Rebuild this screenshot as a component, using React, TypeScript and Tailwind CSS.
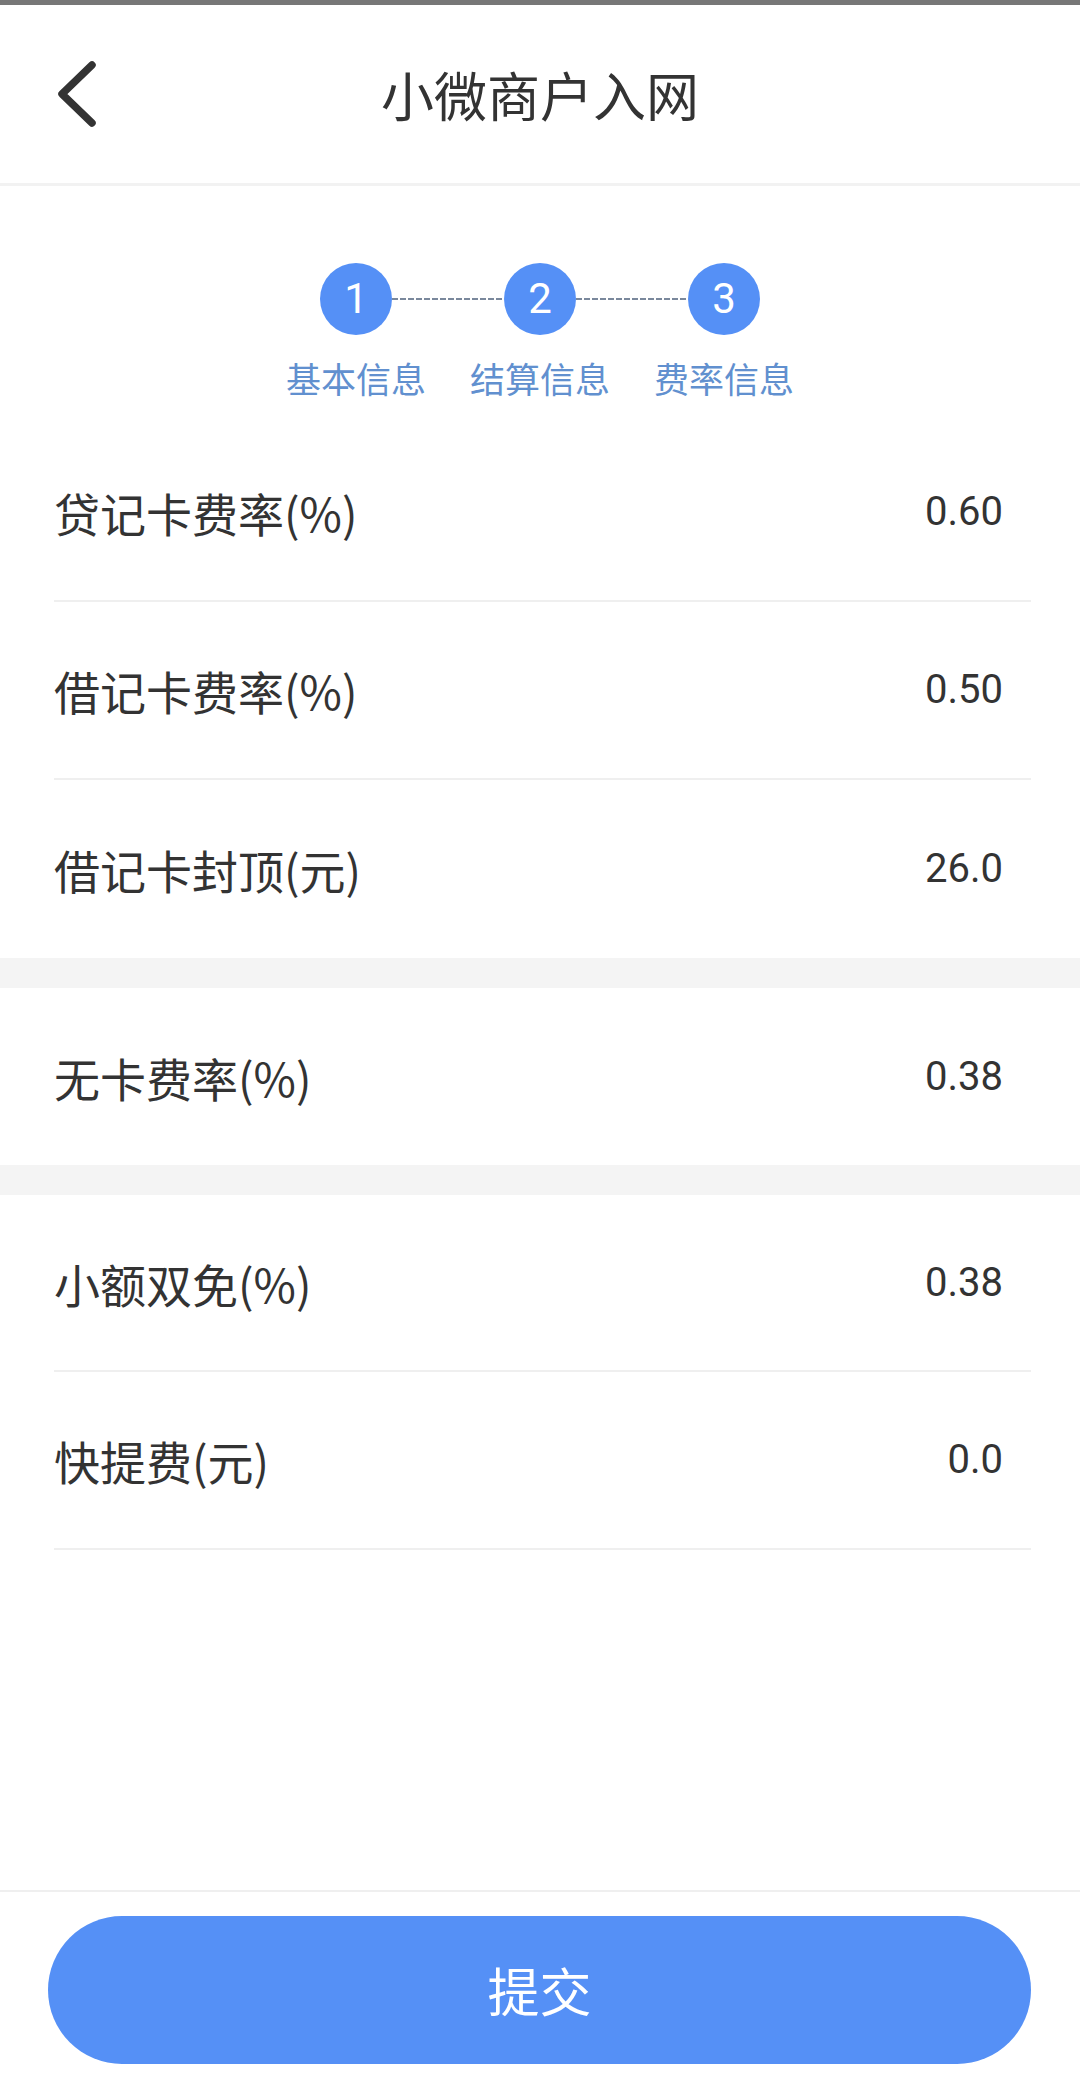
import React from "react";

const font = { fontFamily: '"Noto Sans CJK SC", "Noto Sans", sans-serif' };

interface RateRowProps {
  label: string;
  value: string;
  divider?: boolean;
  height?: string;
}

function RateRow({ label, value, divider = true, height = "h-[178px]" }: RateRowProps) {
  return (
    <div
      className={`ml-[54px] mr-[49px] flex items-center justify-between ${height} ${
        divider ? "border-b-2 border-[#efefef]" : ""
      }`}
    >
      <span className="text-[46px] leading-none text-[#333]">{label}</span>
      <span className="pr-[28px] font-['Roboto'] text-[40px] leading-none text-[#333]">{value}</span>
    </div>
  );
}

function Band() {
  return <div className="h-[30px] bg-[#f4f4f4]" />;
}

const steps = ["基本信息", "结算信息", "费率信息"];

function Stepper() {
  return (
    <div className="flex h-[238px] flex-col items-center pt-[77px]">
      {/* circles */}
      <div className="flex items-center">
        {steps.map((_, i) => (
          <React.Fragment key={i}>
            {i > 0 && (
              <div className="h-[2px] w-[112px] bg-[repeating-linear-gradient(90deg,#7a889c_0_6px,transparent_6px_8px)]" />
            )}
            <div className="flex h-[72px] w-[72px] items-center justify-center rounded-full bg-[#5590f6] font-['Roboto'] text-[42px] leading-none text-white">
              {i + 1}
            </div>
          </React.Fragment>
        ))}
      </div>
      {/* labels */}
      <div className="mt-[25px] flex">
        {steps.map((s) => (
          <div key={s} className="w-[184px] text-center text-[35px] leading-none text-[#6190cf]">
            {s}
          </div>
        ))}
      </div>
    </div>
  );
}

export default function App() {
  return (
    <div className="flex min-h-[2088px] w-full flex-col bg-white" style={font}>
      <div className="h-[5px] bg-[#777]" />

      {/* Header */}
      <div className="grid h-[181px] grid-cols-[1fr_auto_1fr] items-center border-b-[3px] border-[#f2f2f2]">
        <div className="pl-[55px]">
          <svg width="42" height="66" viewBox="0 0 42 66" fill="none">
            <polyline
              points="37,4 7,33 37,62"
              stroke="#333"
              strokeWidth="7.5"
              strokeLinecap="round"
              strokeLinejoin="round"
            />
          </svg>
        </div>
        <h1 className="text-[53px] font-normal leading-none text-[#333]">小微商户入网</h1>
        <div />
      </div>

      <Stepper />

      <RateRow label="贷记卡费率(%)" value="0.60" />
      <RateRow label="借记卡费率(%)" value="0.50" />
      <RateRow label="借记卡封顶(元)" value="26.0" divider={false} />
      <Band />
      <RateRow label="无卡费率(%)" value="0.38" divider={false} height="h-[177px]" />
      <Band />
      <RateRow label="小额双免(%)" value="0.38" height="h-[177px]" />
      <RateRow label="快提费(元)" value="0.0" />

      <div className="flex-1" />

      {/* Footer */}
      <div className="border-t-2 border-[#efefef] pb-[24px] pl-[48px] pr-[49px] pt-[24px]">
        <button className="flex h-[148px] w-full items-center justify-center rounded-full bg-[#5590f6] text-[52px] leading-none text-white">
          提交
        </button>
      </div>
    </div>
  );
}
